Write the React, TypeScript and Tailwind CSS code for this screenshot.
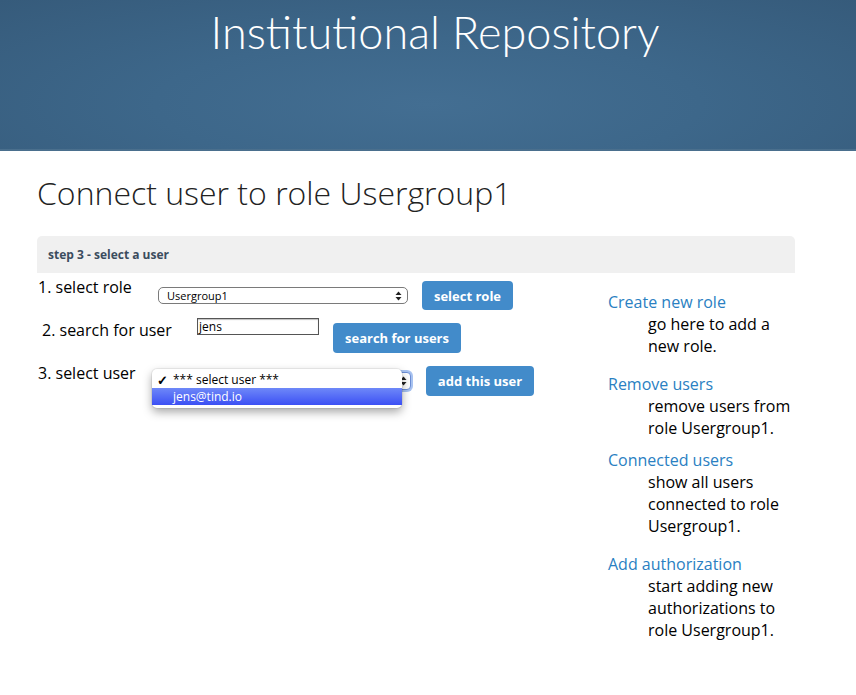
import React from "react";

const font = { fontFamily: '"Open Sans", "Liberation Sans", sans-serif' };

function UpDown() {
    return (
        <svg width="7" height="10" viewBox="0 0 7 10" className="shrink-0">
            <path d="M3.5 0.5 L6.5 4 L0.5 4 Z" fill="#222" />
            <path d="M3.5 9.5 L6.5 6 L0.5 6 Z" fill="#222" />
        </svg>
    );
}

function Button({ label, w, h, className = "" }: { label: string; w: string; h: string; className?: string }) {
    return (
        <div
            className={`flex items-center justify-center rounded-[4px] bg-[#428bca] text-[13px] font-bold text-white ${w} ${h} ${className}`}
        >
            {label}
        </div>
    );
}

const links = [
    { title: "Create new role", lines: ["go here to add a", "new role."], mt: "mt-0" },
    { title: "Remove users", lines: ["remove users from", "role Usergroup1."], mt: "mt-[16px]" },
    { title: "Connected users", lines: ["show all users", "connected to role", "Usergroup1."], mt: "mt-[10px]" },
    { title: "Add authorization", lines: ["start adding new", "authorizations to", "role Usergroup1."], mt: "mt-[16px]" },
];

export default function App() {
    return (
        <div className="min-h-[695px] w-[856px] bg-white text-black" style={font}>
            {/* Banner */}
            <header className="h-[151px] bg-[radial-gradient(ellipse_at_50%_70%,#436e92_0%,#3d678a_45%,#365b7b_100%)] border-b-2 border-[#4a6f8d]">
                <h1
                    className="pl-[14px] pt-[5px] text-center text-[45px] font-light leading-[1.2] text-white"
                    style={{ fontFamily: 'Lato, "Open Sans", sans-serif' }}
                >
                    Institutional Repository
                </h1>
            </header>

            <main className="pl-[37px]">
                <h2 className="mt-[22px] text-[32px] font-light leading-[40px] text-[#222]">
                    Connect user to role Usergroup1
                </h2>

                <div className="mt-[23px] w-[758px]">
                    <div className="flex h-[37px] items-center rounded-t-[5px] bg-[#f0f0f0] pl-[11px] text-[12px] font-bold text-[#3b4c5e]">
                        step 3 - select a user
                    </div>

                    <div className="flex">
                        {/* Form steps */}
                        <div className="w-[571px] pl-[1px] pt-[4px] text-[16px] leading-[20px]">
                            <div className="flex items-start">
                                <div className="w-[120px]">1. select role</div>
                                <div className="mt-[10px] flex h-[17px] w-[250px] items-center justify-between rounded-[5px] border border-[#7a7a7a] bg-white pl-[8px] pr-[5px] text-[11px] leading-none">
                                    <span>Usergroup1</span>
                                    <UpDown />
                                </div>
                                <Button label="select role" w="w-[91px]" h="h-[29px]" className="ml-[14px] mt-[4px]" />
                            </div>

                            <div className="mt-[8px] flex items-start">
                                <div className="mt-[2px] w-[159px] pl-[4px]">2. search for user</div>
                                <div className="flex h-[17px] w-[122px] items-center border border-[#555] bg-white pl-[1px] text-[12px] leading-none shadow-[inset_0_1px_1px_rgba(0,0,0,0.25)]">
                                    jens
                                </div>
                                <Button label="search for users" w="w-[128px]" h="h-[30px]" className="ml-[14px] mt-[5px]" />
                            </div>

                            <div className="mt-[10px] flex items-start">
                                <div className="w-[122px]">3. select user</div>
                                <div className="relative mt-[9px] flex h-[18px] w-[251px] items-center justify-end rounded-[4px] border border-[#6d8fd6] bg-white pr-[3px] shadow-[0_0_0_2px_rgba(96,146,230,0.55)]">
                                    <UpDown />
                                    <div className="absolute left-[-9px] top-[-4px] w-[250px] rounded-[5px] bg-white pb-[3px] pt-[3px] text-[12px] leading-[16px] shadow-[0_4px_10px_rgba(0,0,0,0.35),0_0_0_1px_rgba(0,0,0,0.06)]">
                                        <div className="flex h-[16px] items-center">
                                            <span className="w-[21px] pl-[5px] text-[13px] font-bold">✓</span>
                                            <span>*** select user ***</span>
                                        </div>
                                        <div className="flex h-[17px] items-center bg-[linear-gradient(#6e88f8,#3c50f4)] text-white">
                                            <span className="w-[21px]" />
                                            <span>jens@tind.io</span>
                                        </div>
                                    </div>
                                </div>
                                <Button label="add this user" w="w-[108px]" h="h-[30px]" className="ml-[15px] mt-[3px]" />
                            </div>
                        </div>

                        {/* Related links */}
                        <dl className="pt-[18px] text-[16px] leading-[22px]">
                            {links.map((l) => (
                                <div key={l.title} className={l.mt}>
                                    <dt className="text-[#2a80c2]">{l.title}</dt>
                                    <dd className="pl-[40px]">
                                        {l.lines.map((line) => (
                                            <div key={line}>{line}</div>
                                        ))}
                                    </dd>
                                </div>
                            ))}
                        </dl>
                    </div>
                </div>
            </main>
        </div>
    );
}
